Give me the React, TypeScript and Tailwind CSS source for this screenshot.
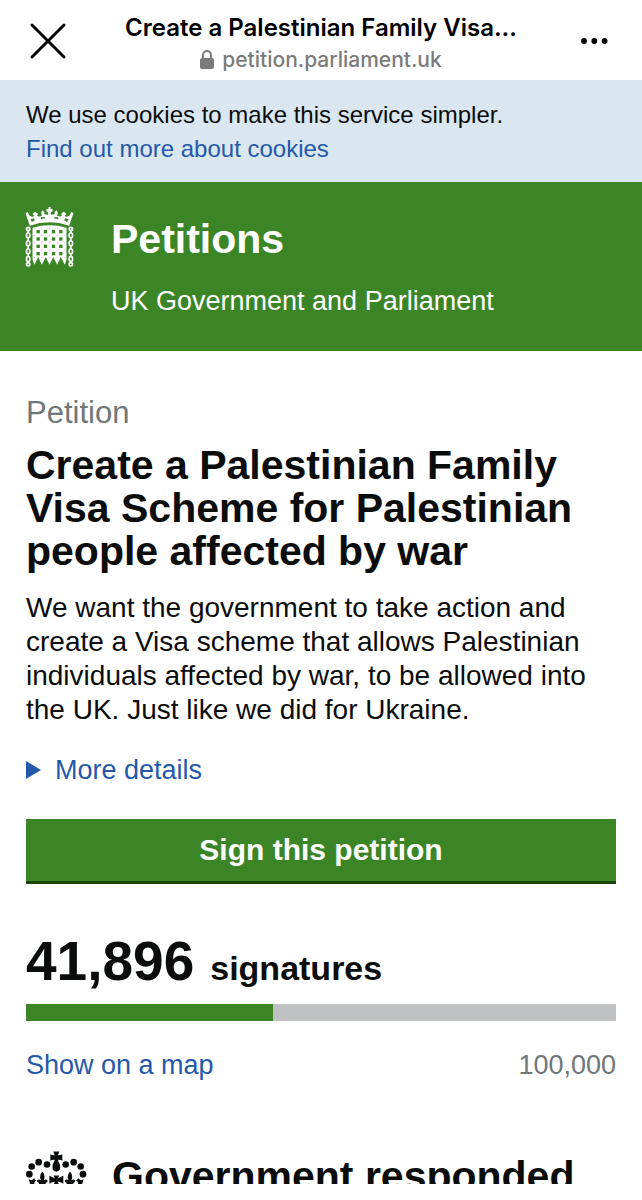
import React, { useState } from 'react';

const SIGNATURES = 41896;
const TARGET = 100000;

const PortcullisLogo: React.FC = () => (
  <svg viewBox="46 50 146 180" className="w-[49px] h-[60px] shrink-0" aria-hidden="true">
    {/* Crown */}
    <path
      d="M60 106 L47 68 L54 65 L58 75 Q66 82 74 77 L68 71 L76 64 L84 70 L82 77 Q88 80 96 76 L94 66 L98 60 L104 66 L103 72 L115 73 L115 64 L110 64 L110 56 L116 56 L116 50 L122 50 L122 56 L128 56 L128 64 L123 64 L123 73 L135 72 L134 66 L140 60 L144 66 L142 76 Q150 80 156 77 L154 70 L162 64 L170 71 L164 77 Q172 82 180 75 L184 65 L191 68 L178 106 Q119 86 60 106 Z"
      fill="#fff"
    />
    <g fill="#3c8527">
      <path d="M62 87 L72 84 L75 90 L66 95 Z M93 81 L104 80 L106 84 L93 87 Z M134 80 L145 81 L145 87 L132 84 Z M166 84 L176 87 L172 95 L163 90 Z" />
    </g>
    {/* Gate */}
    <path
      d="M68 112 Q119 98 170 112 V208 L165 223 L153 200 L142 223 L130 200 L119 223 L108 200 L96 223 L85 200 L74 223 L68 208 Z"
      fill="#fff"
    />
    <g fill="#3c8527">
      {[85, 107, 131, 153].map((x) =>
        [124, 146, 168, 190].map((y) => (
          <rect key={`${x}-${y}`} x={x - 5} y={y - 5} width="10" height="10" />
        ))
      )}
      {[74, 96, 119, 142, 165].map((x) =>
        [113, 135, 157, 179, 201].map((y) => <circle key={`${x}-${y}`} cx={x} cy={y} r="1.4" />)
      )}
    </g>
    {/* Chains */}
    <g fill="none" stroke="#fff" strokeWidth="5">
      {[55, 183].map((x) => (
        <React.Fragment key={x}>
          <circle cx={x} cy="116" r="5" />
          {[135, 159, 183, 206].map((y) => (
            <rect key={y} x={x - 5} y={y - 7} width="10" height="14" rx="4" />
          ))}
          <circle cx={x} cy="222" r="5" />
          <path d={`M${x} 120 V128 M${x} 142 V152 M${x} 166 V176 M${x} 190 V199`} />
        </React.Fragment>
      ))}
    </g>
  </svg>
);

const CrownIcon: React.FC = () => (
  <svg viewBox="49 62 183 101" className="w-[61px] h-[34px] shrink-0" fill="#0b0c0c" aria-hidden="true">
    {[
      [59, 131], [66, 108], [87, 95], [112, 102],
      [168, 102], [192, 95], [213, 108], [220, 131],
    ].map(([cx, cy]) => (
      <circle key={cx} cx={cx} cy={cy} r="10" />
    ))}
    <path d="M131 63 H149 L145 74 Q152 75 158 71 V91 Q151 87 145 88 Q145 93 150 100 Q154 115 148 120 Q140 127 132 120 Q126 115 130 100 Q135 93 135 88 Q129 87 122 91 V71 Q128 75 135 74 Z" />
    <path d="M119 136 Q127 140 136 144 L131 135 H149 L144 144 Q153 140 161 136 V160 Q150 153 145 154 L148 163 H132 L135 154 Q130 153 119 160 Z" />
    {[98, 181].map((x) => (
      <path
        key={x}
        d={`M${x} 123 Q${x + 9} 133 ${x + 6} 144 L${x + 4} 149 Q${x + 12} 144 ${x + 16} 151 Q${x + 16} 157 ${x + 10} 157 V163 H${x - 10} V157 Q${x - 16} 157 ${x - 16} 151 Q${x - 12} 144 ${x - 4} 149 L${x - 6} 144 Q${x - 9} 133 ${x} 123 Z`}
      />
    ))}
    <path d="M57 145 Q62 151 68 148 L73 143 L80 151 Q73 151 74 163 H62 Z" />
    <path d="M222 145 Q217 151 211 148 L206 143 L199 151 Q206 151 205 163 H217 Z" />
  </svg>
);

const BrowserBar: React.FC = () => (
  <header className="flex items-center justify-between h-20 px-7 bg-white font-[Inter,sans-serif]">
    <button aria-label="Close" className="w-10 h-10 flex items-center justify-center">
      <svg viewBox="0 0 40 40" className="w-10 h-10" stroke="#000" strokeWidth="3" strokeLinecap="round">
        <path d="M4 5 L36 37 M36 5 L4 37" />
      </svg>
    </button>
    <div className="flex flex-col items-center min-w-0 pt-2">
      <span className="max-w-full text-2xl leading-8 font-semibold text-black truncate">
        Create a Palestinian Family Visa...
      </span>
      <span className="flex items-center gap-2 text-[21px] leading-8 font-medium text-[#7b7b7b]">
        <svg viewBox="0 0 14 20" className="w-[14px] h-5" aria-hidden="true">
          <rect x="0" y="8" width="14" height="11" rx="2" fill="#7b7b7b" />
          <path d="M3 9 V5 a4 4 0 0 1 8 0 V9" fill="none" stroke="#7b7b7b" strokeWidth="2" />
        </svg>
        petition.parliament.uk
      </span>
    </div>
    <button aria-label="More options" className="w-10 h-10 flex items-center justify-center">
      <svg viewBox="0 0 40 40" className="w-10 h-10" fill="#000">
        <circle cx="10" cy="21" r="2.9" />
        <circle cx="20.3" cy="21" r="2.9" />
        <circle cx="30.6" cy="21" r="2.9" />
      </svg>
    </button>
  </header>
);

export default function App() {
  const [open, setOpen] = useState(false);
  const progress = Math.min(100, (SIGNATURES / TARGET) * 100);

  return (
    <div className="min-h-screen bg-white text-[#0b0c0c] font-['Liberation_Sans',Arial,sans-serif] text-[27px] leading-[34px]">
      <BrowserBar />

      {/* Cookie notice */}
      <div className="bg-[#dae6f0] px-[26px] pt-[18px] pb-4 text-2xl leading-[34px]">
        <p>We use cookies to make this service simpler.</p>
        <a href="#cookies" className="text-[#2459a9]">Find out more about cookies</a>
      </div>

      {/* Site banner */}
      <div className="flex gap-[37px] bg-[#3c8527] text-white px-[25px] pt-[25px] pb-[33px]">
        <PortcullisLogo />
        <div>
          <a href="#home" className="block text-[41px] leading-[64px] font-bold">Petitions</a>
          <p className="mt-[13px]">UK Government and Parliament</p>
        </div>
      </div>

      <main className="px-[26px] pt-[45px]">
        <p className="text-[31px] text-[#6f777b]">Petition</p>
        <h1 className="mt-[14px] text-[41px] leading-[43px] font-bold">
          Create a Palestinian Family Visa Scheme for Palestinian people affected by war
        </h1>
        <p className="mt-[18px] text-[28px]">
          We want the government to take action and create a Visa scheme that allows Palestinian individuals affected by
          war, to be allowed into the UK. Just like we did for Ukraine.
        </p>

        <button
          onClick={() => setOpen(!open)}
          aria-expanded={open}
          className="mt-[26px] flex items-center gap-[14px] text-[#2459a9]"
        >
          <svg viewBox="0 0 15 18" className={`w-[15px] h-[18px] ${open ? 'rotate-90' : ''}`} fill="#2459a9">
            <path d="M0 0 L15 9 L0 18 Z" />
          </svg>
          More details
        </button>

        <button className="mt-8 w-full h-[65px] bg-[#3c8527] border-b-3 border-[#1a4709] text-white text-[30px] font-bold">
          Sign this petition
        </button>

        {/* Signature count */}
        <p className="mt-[46px] leading-[62px] font-bold flex items-baseline gap-4">
          <span className="text-[55px]">{SIGNATURES.toLocaleString('en-GB')}</span>
          <span className="text-[34px]">signatures</span>
        </p>
        <div className="mt-[5px] h-[17px] bg-[#bfc1c3]">
          <div className="h-full bg-[#3c8527]" style={{ width: `${progress}%` }} />
        </div>
        <div className="mt-[27px] flex justify-between">
          <a href="#map" className="text-[#2459a9]">Show on a map</a>
          <span className="text-[#6f777b]">{TARGET.toLocaleString('en-GB')}</span>
        </div>

        {/* Response heading, cut off at the fold */}
        <section className="mt-[69px] h-[33px] overflow-hidden flex gap-[25px]">
          <CrownIcon />
          <h2 className="text-[41px] leading-[50px] font-bold whitespace-nowrap">Government responded</h2>
        </section>
      </main>
    </div>
  );
}
